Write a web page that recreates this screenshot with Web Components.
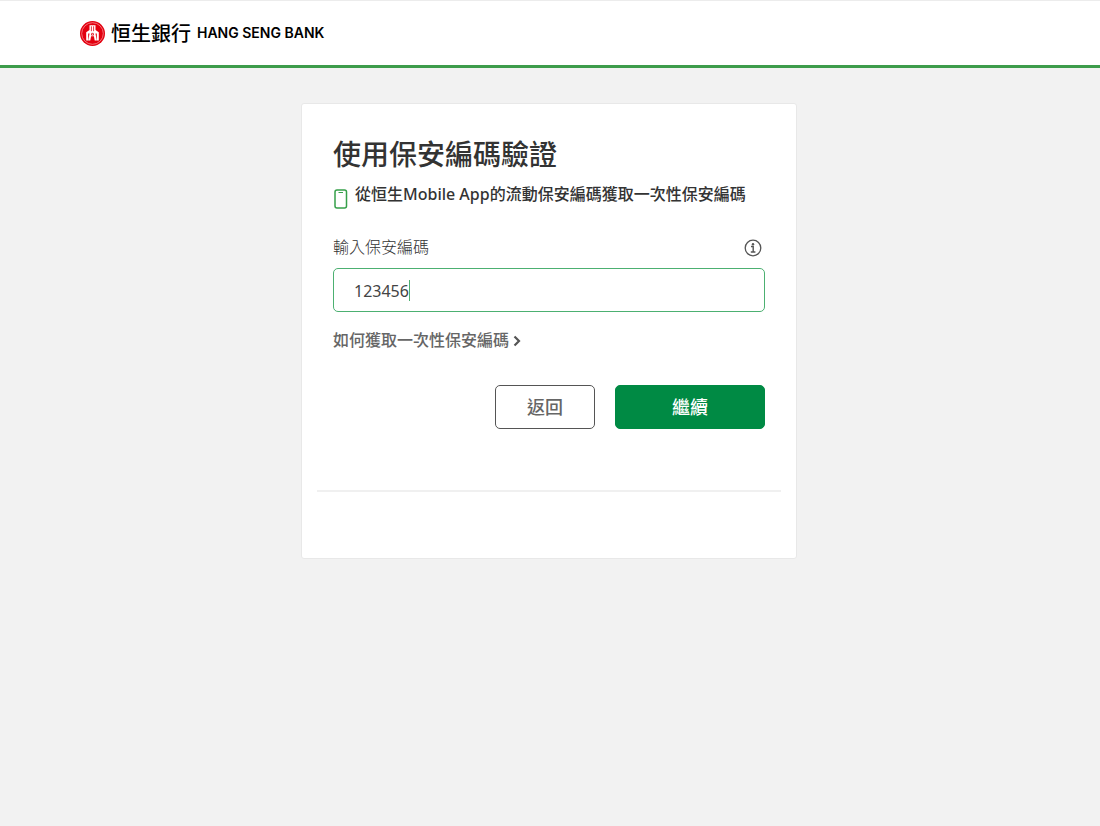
<!DOCTYPE html>
<html lang="zh-Hant">
<head>
  <meta charset="utf-8">
  <meta name="viewport" content="width=device-width, initial-scale=1">
  <title>恒生銀行</title>
  <style>
    body {
      margin: 0;
      min-height: 100vh;
      background-color: #f2f2f2;
      color: #333;
      font-family: "Noto Sans", "Noto Sans CJK TC", sans-serif;
      font-size: 16px;
      line-height: 24px;
    }
    main {
      padding: 35px 18px 35px 16px;
    }
  </style>
</head>
<body>
  <bank-header></bank-header>
  <main>
    <login-card>
      <span slot="title">使用保安編碼驗證</span>
      <span slot="hint">從恒生Mobile App的流動保安編碼獲取一次性保安編碼</span>
      <code-field label="輸入保安編碼" value="123456"></code-field>
      <help-link href="#">如何獲取一次性保安編碼</help-link>
      <bank-button slot="actions" kind="secondary">返回</bank-button>
      <bank-button slot="actions" kind="primary">繼續</bank-button>
    </login-card>
  </main>

  <script>
    class BankHeader extends HTMLElement {
      constructor() {
        super();
        this.attachShadow({ mode: "open" });
      }

      connectedCallback() {
        this.shadowRoot.innerHTML = `
          <style>
            :host {
              display: block;
            }
            header {
              display: flex;
              align-items: center;
              box-sizing: border-box;
              height: 68px;
              padding: 0 80px;
              background-color: #fff;
              border-top: 1px solid #ececec;
              border-bottom: 3px solid #3d9c4b;
            }
            a {
              display: flex;
              align-items: center;
              color: #000;
              text-decoration: none;
            }
            svg {
              display: block;
              margin-right: 6px;
            }
            .zh {
              margin-right: 6px;
              font: 500 20px/24px "Noto Sans CJK TC", sans-serif;
            }
            .en {
              font: 600 14px/24px Inter, sans-serif;
            }
          </style>
          <header>
            <a href="#">
              <svg width="25" height="25" viewBox="0 0 25 25" aria-hidden="true">
                <circle cx="12.5" cy="12.5" r="12.5" fill="#e3000f"/>
                <circle cx="12.5" cy="12.5" r="10.8" fill="none" stroke="#f6a3a8" stroke-width=".7"/>
                <path fill="#fff" d="M9.500 4.300h6v4.700l3.300 2.300v8.200h-2v-7h-1.300l1.200 7h-2l-.8-4.300h-2.800l-.8 4.300h-2l1.200-7H8.200v7h-2v-8.200L9.500 9z"/>
                <path fill="none" stroke="#e3000f" stroke-width=".8" d="M11.400 5.300v4.900M13.600 5.300v4.900M11.700 12.300l-.3 1.800h2.200l-.3-1.800z"/>
              </svg>
              <span class="zh">恒生銀行</span>
              <span class="en">HANG SENG BANK</span>
            </a>
          </header>
        `;
      }
    }

    class LoginCard extends HTMLElement {
      constructor() {
        super();
        this.attachShadow({ mode: "open" });
      }

      connectedCallback() {
        this.shadowRoot.innerHTML = `
          <style>
            :host {
              display: block;
              box-sizing: border-box;
              max-width: 496px;
              margin: 0 auto;
              padding: 32px 15px 66px;
              background-color: #fff;
              border: 1px solid #e8e8e8;
              border-radius: 3px;
            }
            .body {
              padding: 0 16px 61px;
              border-bottom: 2px solid #f0f0f0;
            }
            h1 {
              margin: 0 0 10px;
              font-size: 28px;
              font-weight: 500;
              line-height: 36px;
            }
            .hint {
              display: flex;
              align-items: flex-start;
              gap: 7px;
              margin: 0 0 26px;
              font-weight: 500;
              line-height: 24px;
            }
            .hint svg {
              flex: none;
              margin: 7px 0 0 1px;
            }
            .actions {
              display: flex;
              justify-content: flex-end;
              gap: 20px;
              margin-top: 33px;
            }
          </style>
          <div class="body">
            <h1><slot name="title"></slot></h1>
            <p class="hint">
              <svg width="14" height="20" viewBox="0 0 14 20" aria-hidden="true">
                <rect x="1" y="1" width="11.500" height="18" rx="2" fill="none" stroke="#36a04a" stroke-width="1.500"/>
                <path d="M4.500 3.500h4.500" stroke="#36a04a"/>
              </svg>
              <slot name="hint"></slot>
            </p>
            <slot></slot>
            <div class="actions"><slot name="actions"></slot></div>
          </div>
        `;
      }
    }

    class CodeField extends HTMLElement {
      constructor() {
        super();
        this.attachShadow({ mode: "open" });
      }

      connectedCallback() {
        this.shadowRoot.innerHTML = `
          <style>
            :host {
              display: block;
              margin-bottom: 16px;
            }
            .top {
              display: flex;
              align-items: center;
              justify-content: space-between;
              margin-bottom: 9px;
              color: #555;
            }
            label {
              font-weight: 300;
              color: #333;
            }
            button {
              display: block;
              margin: 2px 3px 0 0;
              padding: 0;
              border: 0;
              background: none;
              color: #555;
              cursor: pointer;
            }
            svg {
              display: block;
            }
            .box {
              position: relative;
            }
            input {
              display: block;
              box-sizing: border-box;
              width: 100%;
              height: 44px;
              padding: 2px 20px 0;
              border: 1px solid #4cb071;
              border-radius: 5px;
              outline: none;
              background-color: #fff;
              color: #444;
              font: inherit;
              caret-color: transparent;
            }
            .caret {
              position: absolute;
              left: 76px;
              top: 12px;
              width: 1px;
              height: 21px;
              background-color: #4cb071;
            }
          </style>
          <div class="top">
            <label for="code"></label>
            <button type="button" aria-label="i">
              <svg width="18" height="18" viewBox="0 0 18 18" aria-hidden="true">
                <circle cx="9" cy="9" r="7.800" fill="none" stroke="currentColor" stroke-width="1.300"/>
                <circle cx="9" cy="5.200" r="1.200" fill="currentColor"/>
                <path d="M7 7.500h2.200v5.300M6.800 13h4.600" fill="none" stroke="currentColor" stroke-width="1.400"/>
              </svg>
            </button>
          </div>
          <div class="box">
            <input id="code" type="text" inputmode="numeric" autocomplete="off">
            <span class="caret"></span>
          </div>
        `;
        this.input = this.shadowRoot.querySelector("input");
        this.shadowRoot.querySelector("label").textContent = this.getAttribute("label");
        this.input.value = this.getAttribute("value");
        this.input.addEventListener("input", () => {
          // back to the native caret once the user types
          this.shadowRoot.querySelector(".caret").style.display = "none";
          this.input.style.caretColor = "#4cb071";
        });
      }
    }

    class HelpLink extends HTMLElement {
      constructor() {
        super();
        this.attachShadow({ mode: "open" });
      }

      connectedCallback() {
        this.shadowRoot.innerHTML = `
          <style>
            :host {
              display: block;
            }
            a {
              display: inline-flex;
              align-items: center;
              gap: 4px;
              color: #666;
              font-weight: 500;
              text-decoration: none;
            }
            svg {
              margin-top: 2px;
            }
          </style>
          <a>
            <slot></slot>
            <svg width="8" height="12" viewBox="0 0 8 12" aria-hidden="true">
              <path d="M1.500 1.500L6 6l-4.500 4.500" fill="none" stroke="#555" stroke-width="2.200"/>
            </svg>
          </a>
        `;
        this.shadowRoot.querySelector("a").href = this.getAttribute("href");
      }
    }

    class BankButton extends HTMLElement {
      constructor() {
        super();
        this.attachShadow({ mode: "open" });
      }

      connectedCallback() {
        this.shadowRoot.innerHTML = `
          <style>
            :host {
              display: block;
              width: 100px;
            }
            :host([kind="primary"]) {
              width: 150px;
            }
            button {
              display: block;
              box-sizing: border-box;
              width: 100%;
              height: 44px;
              padding: 0;
              border: 1px solid #555;
              border-radius: 5px;
              background-color: #fff;
              color: #666;
              font: inherit;
              font-size: 18px;
              font-weight: 500;
              cursor: pointer;
            }
            :host([kind="primary"]) button {
              border-color: #008a44;
              background-color: #008a44;
              color: #fff;
            }
          </style>
          <button type="button"><slot></slot></button>
        `;
      }
    }

    customElements.define("bank-header", BankHeader);
    customElements.define("login-card", LoginCard);
    customElements.define("code-field", CodeField);
    customElements.define("help-link", HelpLink);
    customElements.define("bank-button", BankButton);
  </script>
</body>
</html>
